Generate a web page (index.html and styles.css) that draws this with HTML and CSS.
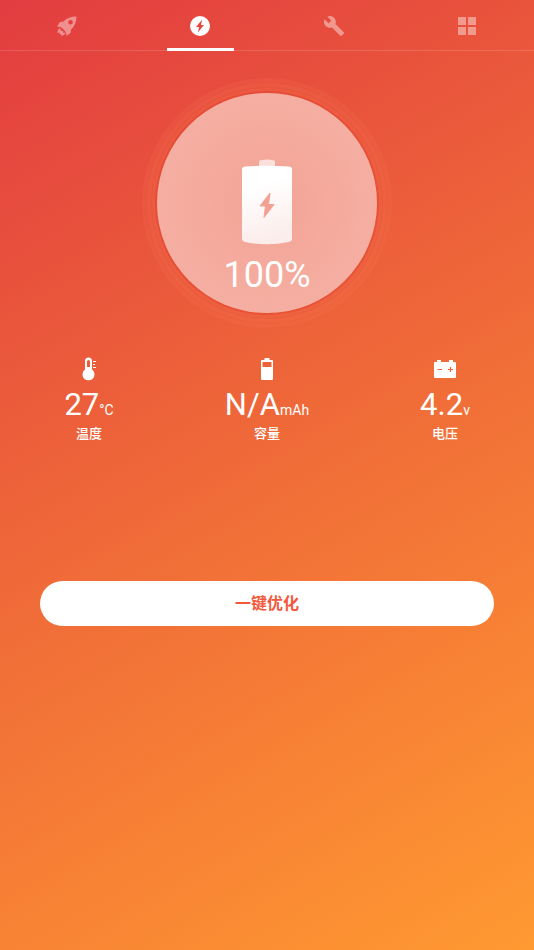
FILE: index.html
```html
<!DOCTYPE html>
<html lang="zh-CN">
<head>
<meta charset="utf-8">
<meta name="viewport" content="width=device-width, initial-scale=1">
<title>电池</title>
<link rel="stylesheet" href="styles.css">
</head>
<body>
<nav class="tabs">
  <a class="tab" href="#boost" aria-label="加速">
    <svg width="20" height="20" viewBox="0 0 20 20"><path fill="currentColor" fill-rule="evenodd" d="M19.500.5C14 .5 9.500 2 6.500 5.500L3 6 0 10.500l3.500.5 2 1.500 2 2 1.500 2 .5 3.500 4-3 .5-3.500C17.500 10.500 19.500 6 19.500.5ZM13.500 4a2.300 2.300 0 1 1 0 4.600 2.300 2.300 0 0 1 0-4.600ZM3 12C1 13 .3 15 .5 17l2-.7-.3 2 2-.5L4 19.700c2 0 4-1 4.500-3.200l-2.500.3.300-2-2.300.200Z"/></svg>
  </a>
  <a class="tab tab-active" href="#battery" aria-label="电池" aria-current="page">
    <svg width="20" height="20" viewBox="0 0 20 20"><path fill="currentColor" fill-rule="evenodd" d="M10 0a10 10 0 1 1 0 20 10 10 0 0 1 0-20ZM12 3.800 6 11h3L8 16.300 14 9h-3Z"/></svg>
  </a>
  <a class="tab" href="#tools" aria-label="工具">
    <svg width="20" height="20" viewBox="1 1 22 22"><path fill="currentColor" d="M22.700 19l-9.100-9.100c.9-2.300.4-5-1.500-6.900-2-2-5-2.400-7.400-1.300L9 6 6 9 1.600 4.700C.4 7.100.9 10.100 2.900 12.100c1.900 1.900 4.600 2.400 6.900 1.500l9.100 9.100c.4.4 1 .4 1.400 0l2.300-2.300c.5-.4.5-1.100.1-1.400z"/></svg>
  </a>
  <a class="tab" href="#apps" aria-label="应用">
    <svg width="18" height="18" viewBox="0 0 18 18"><path fill="currentColor" d="M0 0h8v8H0ZM10 0h8v8h-8ZM0 10h8v8H0ZM10 10h8v8h-8Z"/></svg>
  </a>
</nav>
<main class="content">
  <section class="gauge">
    <svg class="battery" width="50" height="86" viewBox="0 0 50 86">
      <defs><linearGradient id="cell" x1="0" y1="0" x2="0.200" y2="1"><stop offset="0.300" stop-color="#fff"/><stop offset="1" stop-color="#fbedeb"/></linearGradient></defs>
      <path fill="#fce0dc" d="M17 8V3q0-2 3-2 5-1 10 0 3 0 3 2v5Z"/>
      <path fill="url(#cell)" d="M0 10q0-2 3-2.500 22-1.500 44 0 3 .5 3 2.500v70q0 2-3 3-22 4.500-44 0-3-1-3-3Z"/>
      <path fill="#f2a193" stroke="#f2a193" stroke-linejoin="round" d="M28 34 18 47h5.500L22 58.500 32 45.500h-5.500Z"/>
    </svg>
    <p class="level">100%</p>
  </section>
  <dl class="stats">
    <div class="stat">
      <dt class="name">温度</dt>
      <dd class="value">27<span class="unit">°C</span></dd>
      <dd class="icon"><svg width="14" height="24" viewBox="0 0 14 24"><path fill="currentColor" fill-rule="evenodd" d="M3 4a3.500 3.500 0 0 1 7 0v8.500a6 6 0 1 1-7 0ZM5 4.500V10h3V4.500a1.500 1.500 0 0 0-3 0Z"/><path stroke="currentColor" d="M11 4.500h3M11 7.500h2M11 10.500h3"/></svg></dd>
    </div>
    <div class="stat">
      <dt class="name">容量</dt>
      <dd class="value">N/A<span class="unit">mAh</span></dd>
      <dd class="icon"><svg width="12" height="22" viewBox="0 0 12 22"><path fill="currentColor" fill-rule="evenodd" d="M3.500 2V0h5v2H11q1 0 1 1v18q0 1-1 1H1q-1 0-1-1V3q0-1 1-1ZM1.500 4v5h9V4Z"/></svg></dd>
    </div>
    <div class="stat">
      <dt class="name">电压</dt>
      <dd class="value">4.2<span class="unit">v</span></dd>
      <dd class="icon"><svg width="22" height="18" viewBox="0 0 22 18"><path fill="currentColor" d="M1 2h2V0h4v2h8V0h4v2h2q1 0 1 1v14q0 1-1 1H1q-1 0-1-1V3q0-1 1-1Z"/><path stroke="#ee6437" stroke-width="1.200" d="M3.500 9.500h4.500M14 9.500h5M16.500 7v5"/></svg></dd>
    </div>
  </dl>
  <button class="optimize" type="button">一键优化</button>
</main>
</body>
</html>
```

FILE: styles.css
```css
* {
  box-sizing: border-box;
  margin: 0;
}

body {
  min-height: 100vh;
  background: linear-gradient(150deg, #e23c40, #f06c38 50%, #ff9931);
  color: #fff;
  font-family: Roboto, "Noto Sans CJK SC", sans-serif;
}

svg {
  display: block;
}

.tabs {
  display: flex;
  height: 51px;
  border-bottom: 1px solid rgb(255 255 255 / 14%);
}

.tab {
  position: relative;
  display: flex;
  flex: 1;
  align-items: center;
  justify-content: center;
  padding-top: 2px;
  color: rgb(255 255 255 / 42%);
}

.tab-active {
  color: #fff;
}

.tab-active::after {
  content: "";
  position: absolute;
  bottom: -1px;
  left: 25%;
  width: 50%;
  height: 3px;
  background: #fff;
}

.content {
  display: flex;
  flex-direction: column;
  padding: 42px 0 40px;
}

.gauge {
  display: flex;
  flex-direction: column;
  align-items: center;
  align-self: center;
  width: 220px;
  height: 220px;
  padding-top: 66px;
  border-radius: 50%;
  background: radial-gradient(closest-side, #f2a395, #f5afa2);
  box-shadow:
    0 0 0 2px rgb(215 50 40 / 30%),
    0 0 0 5px rgb(255 110 75 / 22%),
    0 0 0 6px rgb(215 60 40 / 14%),
    0 0 0 10px rgb(255 125 90 / 14%),
    0 0 0 11px rgb(215 60 40 / 8%),
    0 0 0 15px rgb(255 135 100 / 12%);
}

.level {
  margin-top: 8px;
  font-size: 36px;
  line-height: 44px;
}

.stats {
  display: flex;
  margin-top: 43px;
}

.stat {
  display: flex;
  flex: 1;
  flex-direction: column-reverse;
  align-items: center;
}

.icon {
  display: flex;
  align-items: center;
  height: 26px;
}

.value {
  margin-top: 9px;
  font-size: 31px;
  line-height: 28px;
}

.unit {
  font-size: 14px;
}

.name {
  font-size: 13px;
  font-weight: 500;
  line-height: 20px;
}

.optimize {
  height: 45px;
  margin: 137px 40px 0;
  border: 0;
  border-radius: 24px;
  background: #fff;
  color: #f25a40;
  font: bold 16px/24px Roboto, "Noto Sans CJK SC", sans-serif;
}
```
